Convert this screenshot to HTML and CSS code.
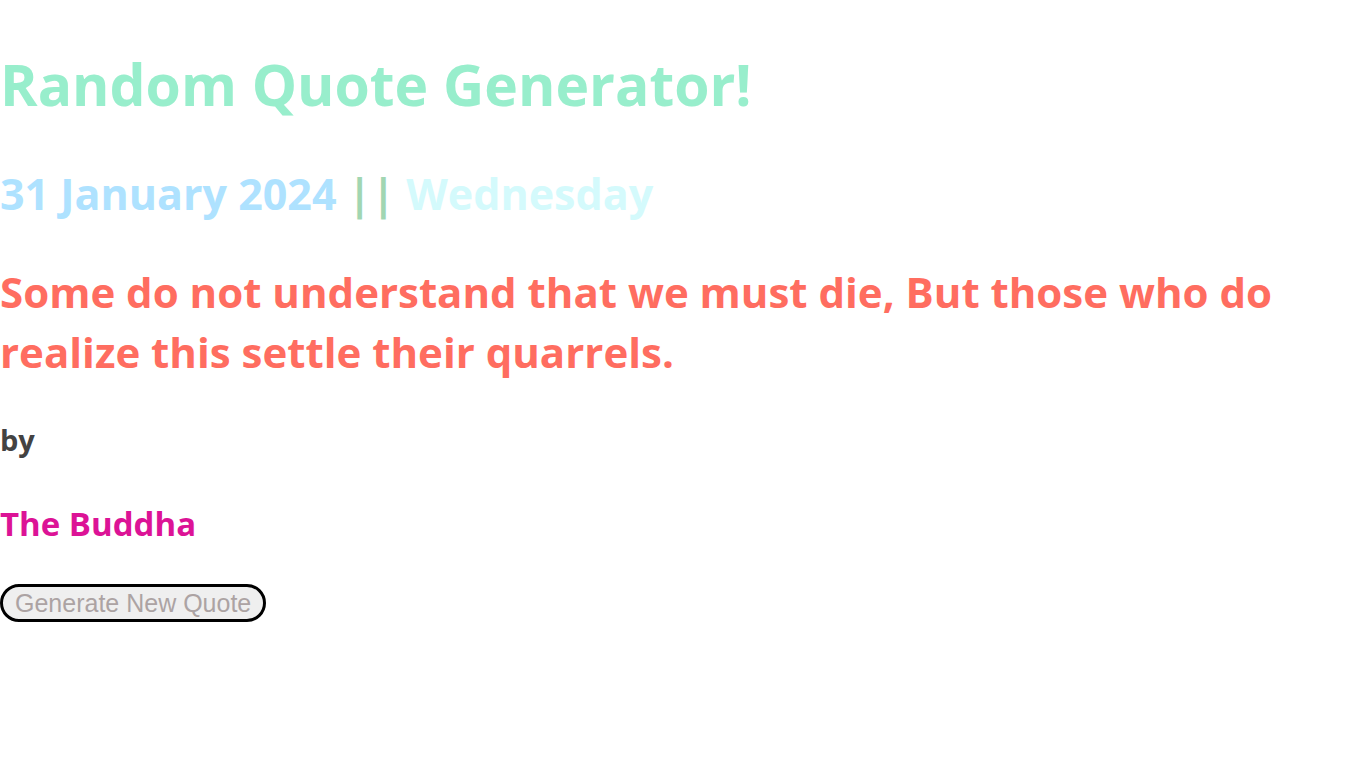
FILE: index.html
```html
<!DOCTYPE html>
<html lang="en">
<head>
<meta charset="utf-8">
<title>Random Quote Generator</title>
<link rel="stylesheet" href="styles.css">
</head>
<body>
<main class="app">
<h1 class="title">Random Quote Generator!</h1>
<h2 class="date-line"><span class="date">31 January 2024</span> || <span class="weekday">Wednesday</span></h2>
<h2 class="quote">Some do not understand that we must die, But those who do realize this settle their quarrels.</h2>
<h4 class="by">by</h4>
<h3 class="author">The Buddha</h3>
<button class="generate" type="button">Generate New Quote</button>
</main>
</body>
</html>
```
FILE: styles.css
```css
body {
  margin: 0;
  background: #fff;
  font-family: "Segoe UI", "Open Sans", sans-serif;
  font-weight: 700;
}
.app {
  display: flex;
  flex-direction: column;
  align-items: flex-start;
  padding-top: 44px;
}
.title, .date-line, .quote, .by, .author {
  margin: 0;
}
.title {
  color: #98eecc;
  font-size: 57px;
  line-height: 80px;
}
.date-line {
  margin-top: 40px;
  color: #a1d6b2;
  font-size: 43px;
  line-height: 60px;
}
.date { color: #aee2ff; }
.weekday { color: #d4fafc; }
.quote {
  margin-top: 38px;
  color: #ff6d60;
  font-size: 42px;
  line-height: 60px;
}
.by {
  margin-top: 38px;
  color: #434242;
  font-size: 29px;
  line-height: 40px;
}
.author {
  margin-top: 40px;
  color: #dc1396;
  font-size: 33px;
  line-height: 48px;
}
.generate {
  margin-top: 36px;
  padding: 1px 12px;
  border: 3px solid #000;
  border-radius: 20px;
  background: #efefef;
  color: #aca3a3;
  font-family: "Liberation Sans", Arial, sans-serif;
  font-size: 25px;
  line-height: 30px;
}
```
